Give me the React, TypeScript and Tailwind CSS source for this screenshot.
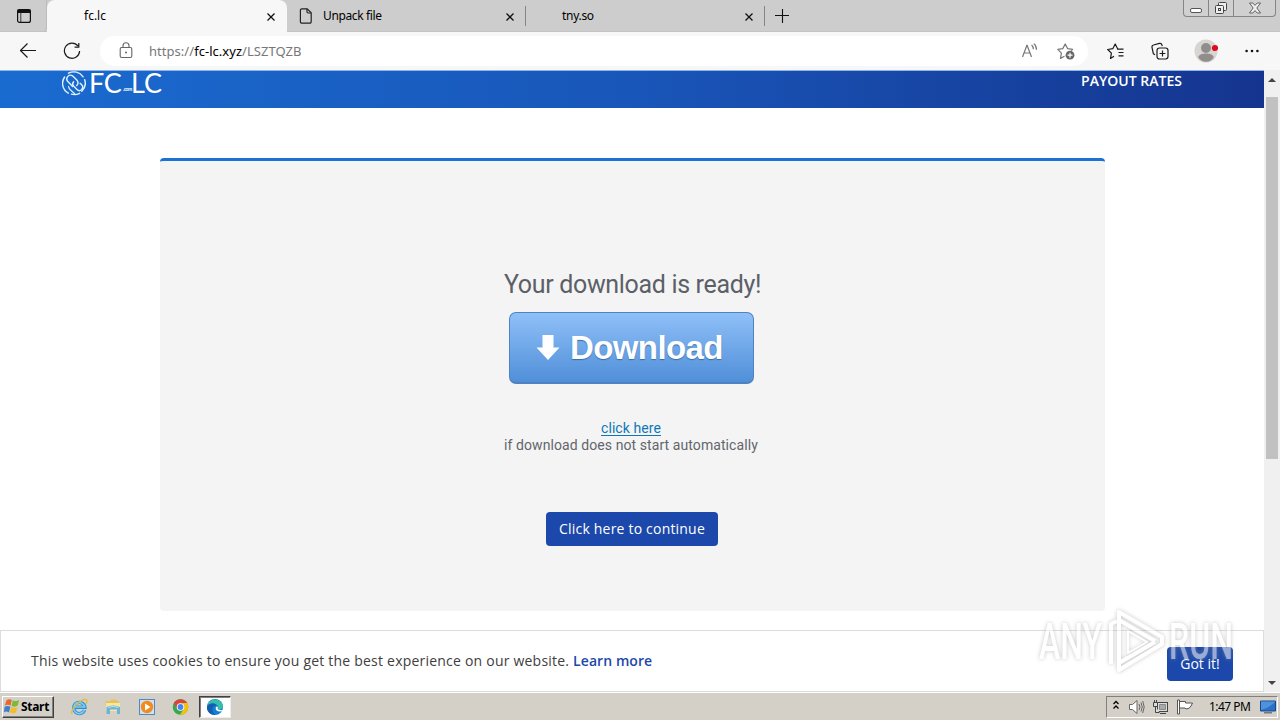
import type { ReactNode } from 'react';

const tabs = [
  { title: 'fc.lc', active: true, file: false },
  { title: 'Unpack file', active: false, file: true },
  { title: 'tny.so', active: false, file: false },
];

function Close() {
  return (
    <svg viewBox="0 0 8 8" className="w-2 h-2 mt-px" fill="none" stroke="#111" strokeWidth="1.3">
      <path d="M.5.5l7 7M7.5.5l-7 7" />
    </svg>
  );
}

function TabBar() {
  return (
    <div className="flex h-8 bg-[#cdcdcd] border-b border-[#c3c3c3] shrink-0">
      <div className="w-[47px] flex items-center pl-4 border-r border-[#bcbcbc] rounded-br">
        <svg viewBox="0 0 16 16" className="w-4 h-4" fill="none" stroke="#111" strokeWidth="1.2">
          <rect x="1.6" y="1.6" width="12.8" height="12.8" rx="2" />
          <path d="M2 2h12v2.4H2z" fill="#111" />
          <path d="M4.8 5v9" strokeWidth="0.8" />
        </svg>
      </div>
      {tabs.map((tab) => (
        <div
          key={tab.title}
          className={
            tab.active
              ? 'w-[240px] h-8 flex items-center bg-[#f7f7f7] rounded-t-lg pl-[37px] pr-3'
              : 'w-[239px] h-8 flex items-center pl-3 pr-3 relative'
          }
        >
          {tab.file && (
            <svg viewBox="0 0 14 16" className="w-3.5 h-4 shrink-0" fill="none" stroke="#222" strokeWidth="1.2">
              <path d="M2.8.8h5.4l4 4v9a1.4 1.4 0 0 1-1.4 1.4h-8a1.4 1.4 0 0 1-1.4-1.4V2.2A1.4 1.4 0 0 1 2.8.8z" />
              <path d="M8 1v2.8A1.2 1.2 0 0 0 9.2 5H12" />
            </svg>
          )}
          <span
            className={
              tab.active
                ? 'flex-1 text-xs leading-4'
                : tab.file
                  ? 'flex-1 pl-2.5 text-xs leading-4 tracking-[-0.36px]'
                  : 'flex-1 pl-6 text-xs leading-4 tracking-[-0.3px]'
            }
          >
            {tab.title}
          </span>
          <Close />
          {!tab.active && <span className="absolute right-0 top-1.5 h-5 w-px bg-[#858585]" />}
        </div>
      ))}
      <svg viewBox="0 0 14 14" className="w-3.5 h-3.5 mt-[9px] ml-[10px]" fill="none" stroke="#111" strokeWidth="1.1">
        <path d="M7.5 0v14M0 6.5h14" />
      </svg>
      <div className="ml-auto mr-1 w-[93px] h-[17px] flex border border-t-0 border-[#858585] rounded-b bg-[#d0d0d0]">
        <div className="w-[25px] border-r border-[#858585] flex justify-center items-end pb-[3px]">
          <span className="w-3 h-[5px] border border-[#555] bg-white rounded-[2px]" />
        </div>
        <div className="w-[25px] border-r border-[#858585] flex justify-center items-center">
          <svg viewBox="0 0 14 14" className="w-3.5 h-3.5" fill="#eee" stroke="#444" strokeWidth="1">
            <rect x="4.5" y="1.5" width="8" height="8" rx="1" />
            <rect x="1.5" y="4.5" width="8" height="8" rx="1" />
            <rect x="4.5" y="7.5" width="2" height="2" />
          </svg>
        </div>
        <div className="flex-1 flex justify-center items-center">
          <svg viewBox="0 0 14 12" className="w-3.5 h-3" fill="#eee" stroke="#555" strokeWidth="0.9">
            <path d="M1.5 1h3.3L7 3.4 9.2 1h3.3L8.8 6l3.7 5H9.2L7 8.6 4.8 11H1.5l3.7-5z" />
          </svg>
        </div>
      </div>
    </div>
  );
}

function Icon({ children, className }: { children: ReactNode; className: string }) {
  return (
    <svg viewBox="0 0 18 18" className={className} fill="none" stroke="currentColor" strokeWidth="1.2" strokeLinejoin="round">
      {children}
    </svg>
  );
}

function Toolbar() {
  return (
    <div className="flex items-center h-[38px] bg-[#f7f7f7] text-[#1a1a1a] pl-[19px] shrink-0">
      <Icon className="w-[18px] h-[18px]">
        <path d="M17 8.5H1.5M8.5 1.500l-7 7 7 7" />
      </Icon>
      <Icon className="w-[18px] h-[18px] ml-[26px]">
        <path d="M15 4A7.6 7.6 0 1 0 16.6 9M15.8 1v4.2h-4.2" />
      </Icon>
      <div className="ml-[19px] w-[988px] h-[30px] rounded-full bg-white flex items-center pl-[19px] pr-[13px] text-[#777]">
        <svg viewBox="0 0 14 17" className="w-3.5 h-[17px] -mt-px" fill="none" stroke="#666" strokeWidth="1.1">
          <rect x="1.2" y="5.5" width="11.6" height="10" rx="1.5" />
          <path d="M4 5.5V3.8a3 3 0 0 1 6 0v1.7" />
          <circle cx="7" cy="10.5" r="0.9" fill="#555" stroke="none" />
        </svg>
        <span className="ml-[16px] text-[13px] leading-5 tracking-[0.04px] whitespace-nowrap">
          https://<span className="text-black">fc-lc.xyz</span>/LSZTQZB
        </span>
        <Icon className="w-[18px] h-[18px] ml-auto">
          <path d="M1.5 15L6 3l4.5 12M3 11h6.2M10.6 3a5 5 0 0 1 1.7 4.2M12.8 1.6a7.4 7.4 0 0 1 2.7 6.1" />
        </Icon>
        <Icon className="w-[18px] h-[18px] ml-[18px]">
          <path d="M7.5 14.3l-4 2.1.9-5.3L.8 7.4l5-.8L8.2 2l2.4 4.6 5 .8-1.3 1.3" />
          <circle cx="13" cy="13.2" r="4.4" fill="#666" stroke="none" />
          <path d="M13 10.7v5M10.5 13.2h5" stroke="#fff" />
        </Icon>
      </div>
      <Icon className="w-[18px] h-[18px] ml-[19px]">
        <path d="M10 7.2h6.5M11.5 10.5h5M11.5 13.8h5M7 14.3l-3.5 2.1.9-5.2L.7 7.5l5.1-.8L8.2 2l2.4 4.7" />
      </Icon>
      <Icon className="w-[18px] h-[18px] ml-[26px]">
        <path d="M4 12.8l-1.6-1L1 5.4A2 2 0 0 1 2.5 3l6-1.6a2 2 0 0 1 2.4 1.4l.4 1.4" />
        <rect x="6" y="6" width="11" height="11" rx="2.4" />
        <path d="M11.5 8.6v5.8M8.6 11.5h5.8" />
      </Icon>
      <svg viewBox="0 0 24 24" className="w-6 h-6 ml-[25px]">
        <circle cx="12" cy="12" r="11.5" fill="#d7d4d2" />
        <circle cx="12" cy="9" r="5" fill="#918d8b" />
        <path d="M4.2 18.3C4.6 16 8 14.5 12 14.5s7.4 1.5 7.8 3.8C18.5 21 15.5 22.8 12 22.8S5.5 21 4.2 18.3z" fill="#918d8b" />
        <circle cx="21" cy="9" r="3.1" fill="#e00b1c" />
      </svg>
      <svg viewBox="0 0 14 4" className="w-3.5 h-1 ml-[27px]" fill="#111">
        <circle cx="1.6" cy="2" r="1.3" />
        <circle cx="7" cy="2" r="1.3" />
        <circle cx="12.4" cy="2" r="1.3" />
      </svg>
    </div>
  );
}

function Header() {
  return (
    <header className="flex h-[38px] bg-linear-to-r from-[#1a6bd0] via-[#1956b9] to-[#15348f] border-t border-[#8fb6e8] pl-[62px] pr-[82px] shrink-0">
      <svg viewBox="0 0 24 26" className="w-6 h-[26px]" fill="none" stroke="#dff3ff" strokeWidth="1.4" strokeLinecap="round">
        <path d="M6.3 22.2A11.2 11.2 0 0 1 2.6 6M6.5 2.2a11.2 11.2 0 0 1 14.6 3.6M22.6 8.6a11.2 11.2 0 0 1-2.8 11.7M17.6 22.3a11.2 11.2 0 0 1-8.2.8" />
        <path d="M10.6 15.4L5.6 10.300a3.700 3.700 0 0 1 5.200-5.200L15 9.300a3.600 3.600 0 0 1-.3 5.200" />
        <path d="M11.600 10.800a3.200 3.200 0 0 0 .2 4.500l3.200 3.200a3.300 3.300 0 0 0 4.700-4.700l-1.600-1.600" />
        <path d="M6.500 15.500q.5 2 2 3.500l4 3.500" strokeWidth="1.100" />
      </svg>
      <div className="ml-[3px] mt-[-1px] flex items-end h-[26px] text-white whitespace-nowrap font-['Lato']">
        <span className="text-[27px] leading-[26px] w-[33px] tracking-[-0.3px]">FC</span>
        <span className="text-[5px] leading-[8px] mb-[3px] w-[9px] pl-px font-bold tracking-[-0.5px]">.com</span>
        <span className="text-[27px] leading-[26px]">LC</span>
      </div>
      <a className="ml-auto font-['Open_Sans'] font-semibold text-sm leading-5 tracking-[0.02px] text-white">PAYOUT RATES</a>
    </header>
  );
}

function Card() {
  return (
    <div className="mt-[50px] ml-[160px] w-[945px] h-[453px] rounded bg-[#f4f4f4] border-t-[3px] border-[#1c71d1] flex flex-col items-center">
      <h1 className="mt-[108px] h-[30px] font-[Roboto] text-[25px] leading-[31px] tracking-[-0.33px] text-[#5b6068] whitespace-nowrap">
        Your download is ready!
      </h1>
      <div className="mt-[13px] mr-[2px] w-[245px] h-[72px] rounded-[7px] border border-[#4f82c2] border-b-2 bg-linear-to-b from-[#8fc0f8] to-[#508fd8] flex items-center pl-[26px]">
        <svg viewBox="0 0 24 26" className="w-6 h-[26px] mt-px" fill="#fff">
          <path d="M6.5 0h11v12.5h6L12 25 .5 12.5h6z" />
        </svg>
        <span className="ml-[10px] mt-px font-['Liberation_Sans'] font-bold text-[33px] leading-9 tracking-[-0.6px] text-white text-shadow-[0_1px_1px_#396ca7] whitespace-nowrap">
          Download
        </span>
      </div>
      <p className="mt-[36px] mr-[3px] font-[Roboto] text-sm leading-[17px] tracking-[0.08px] text-center text-[#62666c] whitespace-nowrap">
        <a className="text-[#0f78b4] underline underline-offset-2">click here</a>
        <br />
        if download does not start automatically
      </p>
      <button className="mt-[58px] mr-[1px] w-[172px] h-[34px] rounded bg-[#1b48aa] font-['Open_Sans'] text-sm text-white whitespace-nowrap tracking-[0.2px]">
        Click here to continue
      </button>
    </div>
  );
}

function CookieBar() {
  return (
    <div className="mt-[19px] h-[62px] border border-[#dcdcdc] bg-white flex items-center pl-[30px] pr-[30px]">
      <p className="font-['Open_Sans'] text-sm leading-5 text-[#404040] whitespace-nowrap tracking-[0.215px]">
        This website uses cookies to ensure you get the best experience on our website.{' '}
        <a className="font-semibold tracking-[0.08px] text-[#1b48aa]">Learn more</a>
      </p>
      <button className="ml-auto mt-1.5 w-[66px] h-[34px] rounded bg-[#1b48aa] font-['Open_Sans'] text-sm text-white">Got it!</button>
    </div>
  );
}

function Scrollbar() {
  return (
    <div className="w-4 h-[622px] bg-[#f0f0f0] flex flex-col items-center py-2">
      <svg viewBox="0 0 8 4" className="w-2 h-1" fill="#444">
        <path d="M0 4l4-4 4 4z" />
      </svg>
      <div className="mt-[15px] w-3 h-[362px] bg-[#c1c1c1]" />
      <svg viewBox="0 0 8 4" className="w-2 h-1 mt-auto -mb-px" fill="#444">
        <path d="M0 0l4 4 4-4z" />
      </svg>
    </div>
  );
}

function Watermark() {
  return (
    <svg viewBox="0 0 200 70" className="absolute left-[1035px] top-[606px] w-[200px] h-[70px] overflow-visible">
      <g className="drop-shadow-[0_0_2px_#999999]" opacity="0.55">
        <g fontFamily="Roboto, sans-serif" fontSize="50" fontWeight="500" fill="#fff">
          <text x="4" y="53" textLength="63" lengthAdjust="spacingAndGlyphs">ANY</text>
          <text x="134" y="53" textLength="64" lengthAdjust="spacingAndGlyphs">RUN</text>
        </g>
        <g fill="none" stroke="#fff" strokeWidth="4" strokeLinejoin="round">
          <path d="M76 58V18l6-3M84 20V6l43 25v7L84 64v-7l36-21" />
          <path d="M84 57V14l36 21" />
          <path d="M93 25v22l19-11z" strokeWidth="2" />
        </g>
      </g>
    </svg>
  );
}

function Taskbar() {
  return (
    <div className="flex items-center h-7 bg-[#d4d0c8] border-t border-white px-0.5 shrink-0">
      <div className="w-[52px] h-[22px] flex items-center pl-px border border-white border-r-[#404040] border-b-[#404040] shadow-[inset_-1px_-1px_0_#808080]">
        <svg viewBox="0 0 16 16" className="w-4 h-4 -mt-px shrink-0">
          <path d="M2.5 2.2Q5 .5 7.8 1.8L6.6 7.6Q4 6 .8 7.6z" fill="#e9672a" />
          <path d="M8.8 2.2q3 1.8 6.4-.1L13.7 7.6q-2.8 2-6.2.3z" fill="#7dba38" />
          <path d="M.6 8.8q3-1.5 5.8 0L5 14.4q-2.7-1.5-5-.2z" fill="#3b7fd0" />
          <path d="M7.3 9.1q3 1.5 6.2-.2L12 14.4q-2.7 1.8-6.2.1z" fill="#f4bd27" />
        </svg>
        <span className="ml-px text-xs font-bold tracking-[-0.3px] text-black">Start</span>
      </div>
      <svg viewBox="0 0 18 18" className="w-[18px] h-[18px] ml-4" fill="none">
        <path d="M14.6 12A5.6 5.6 0 1 1 14.9 9.2H5" stroke="#2f8fd0" strokeWidth="3.4" />
        <path d="M14.4 12A5.6 5.6 0 1 1 14.7 9H5" stroke="#7ccdf3" strokeWidth="1.7" />
        <path d="M2.2 16C-1 12 13-1 16.5 2c1 1 0 3-.8 4" stroke="#e8ba3a" strokeWidth="1.3" />
      </svg>
      <svg viewBox="0 0 18 18" className="w-[18px] h-[18px] ml-4">
        <path d="M1.5 3h5l1-1.5H12L13 3h2v5H1.5z" fill="#e5c25c" />
        <path d="M2 5h14v8H2z" fill="#f7e69d" />
        <path d="M2.5 9q6.5-3 13.5 0v7h-3v-4.5H6V16H2.5z" fill="#6bb4d7" />
        <path d="M4 9.4q5-1.8 10.5 0" fill="none" stroke="#b9e3f5" />
      </svg>
      <svg viewBox="0 0 18 18" className="w-[18px] h-[18px] ml-4">
        <rect x="1.5" y="1.5" width="15" height="15" fill="#cfe1f6" stroke="#5189c4" />
        <circle cx="9" cy="9" r="6.2" fill="#f28a1c" />
        <path d="M7 5.5l5.5 3.5L7 12.5z" fill="#fff" />
      </svg>
      <svg viewBox="0 0 18 18" className="w-[18px] h-[18px] ml-4">
        <circle cx="8.5" cy="9" r="7.8" fill="#37a852" />
        <path d="M1.8 5a7.8 7.8 0 0 1 13.4 0H8.500L5.300 11z" fill="#db4437" />
        <path d="M15.200 5a7.800 7.800 0 0 1-7.200 11.800l3.800-6.100-1.300-5.700z" fill="#f4c20d" />
        <circle cx="8.5" cy="9" r="3.8" fill="#fff" />
        <circle cx="8.5" cy="9" r="2.9" fill="#4285f4" />
      </svg>
      <div className="ml-[9px] w-8 h-[22px] bg-white border border-[#404040] border-r-[#eeeeee] border-b-[#eeeeee] shadow-[inset_1px_1px_0_#808080] flex items-center justify-center">
        <svg viewBox="0 0 18 18" className="w-[18px] h-[18px]">
          <circle cx="9" cy="9" r="8" fill="#1180d3" />
          <path d="M1 8C2.5.5 13-1.2 16.6 6.2c1.5 3.8-1.6 6-5.2 5.2 1.6-1.6 1.2-3.8-.9-5C7.600 4.700 3 5 1 8z" fill="#36bfa6" />
          <path d="M1 8.500C3 5 8.500 4.200 10.500 7.400 6 7 5 12.500 9.200 17 4 17.200.5 13.500 1 8.500z" fill="#155dad" />
          <path d="M16.500 12.800c-3 1.500-7.200.4-6.800-2.800.2-1.200 1-1.700 1.700-1.500.7.4.4 1.600.2 2.600 1.200 1 3.200 1.200 4.900 1z" fill="#fff" />
        </svg>
      </div>
      <div className="ml-auto w-[172px] h-[22px] border border-[#808080] border-r-white border-b-white flex items-center pl-1.5">
        <svg viewBox="0 0 6 10" className="w-1.5 h-2.5 -mt-1" fill="none" stroke="#000" strokeWidth="1.3">
          <path d="M.5 4L3 1.5 5.5 4M.5 8.5L3 6l2.5 2.5" />
        </svg>
        <svg viewBox="0 0 18 16" className="w-[18px] h-4 ml-[9px]" fill="none" stroke="#666" strokeWidth="1">
          <path d="M1.5 5.5h3L9 1.5v13l-4.5-4h-3z" fill="#fff" />
          <path d="M11 5q2 3 0 6M13 3.5q2.5 4.5 0 9M14.7 2q3 6 0 12" />
        </svg>
        <svg viewBox="0 0 18 16" className="w-[18px] h-4 ml-1.5" fill="#ddd" stroke="#444" strokeWidth="1">
          <rect x="5.5" y="3.5" width="10" height="9" />
          <path d="M7.5 5.5h6v5h-6z" fill="#aaa" stroke="#888" />
          <path d="M1.5 3.5h4v4h-4zM2.5 1v2M4.5 1v2M3.5 7.5v6h4M8 14.5h6" />
        </svg>
        <svg viewBox="0 0 18 16" className="w-[18px] h-4 ml-[7px]" fill="#fff" stroke="#555" strokeWidth="1">
          <path d="M.5 1h2v14h-2zM2.5 2.5h6V4h7L14 7q-1.500 3-5 3L8 9H2.500z" />
        </svg>
        <span className="ml-[14px] text-xs tracking-[-0.55px] text-black whitespace-nowrap">1:47 PM</span>
        <svg viewBox="0 0 16 14" className="w-4 h-3.5 ml-auto mr-px">
          <path d="M.5 1h15v10H.5z" fill="#2b71c9" stroke="#174a8c" />
          <path d="M1 10Q9 8 15 2v-.5H1z" fill="#4f92dc" />
          <path d="M4 12h8v1.5H4z" fill="#777" />
        </svg>
      </div>
    </div>
  );
}

export default function App() {
  return (
    <div className="relative w-[1280px] h-[720px] overflow-hidden flex flex-col bg-white font-['Noto_Sans',sans-serif] text-black">
      <TabBar />
      <Toolbar />
      <div className="flex h-[622px] shrink-0">
        <main className="w-[1264px] flex flex-col">
          <Header />
          <Card />
          <CookieBar />
        </main>
        <Scrollbar />
      </div>
      <Taskbar />
      <Watermark />
    </div>
  );
}
